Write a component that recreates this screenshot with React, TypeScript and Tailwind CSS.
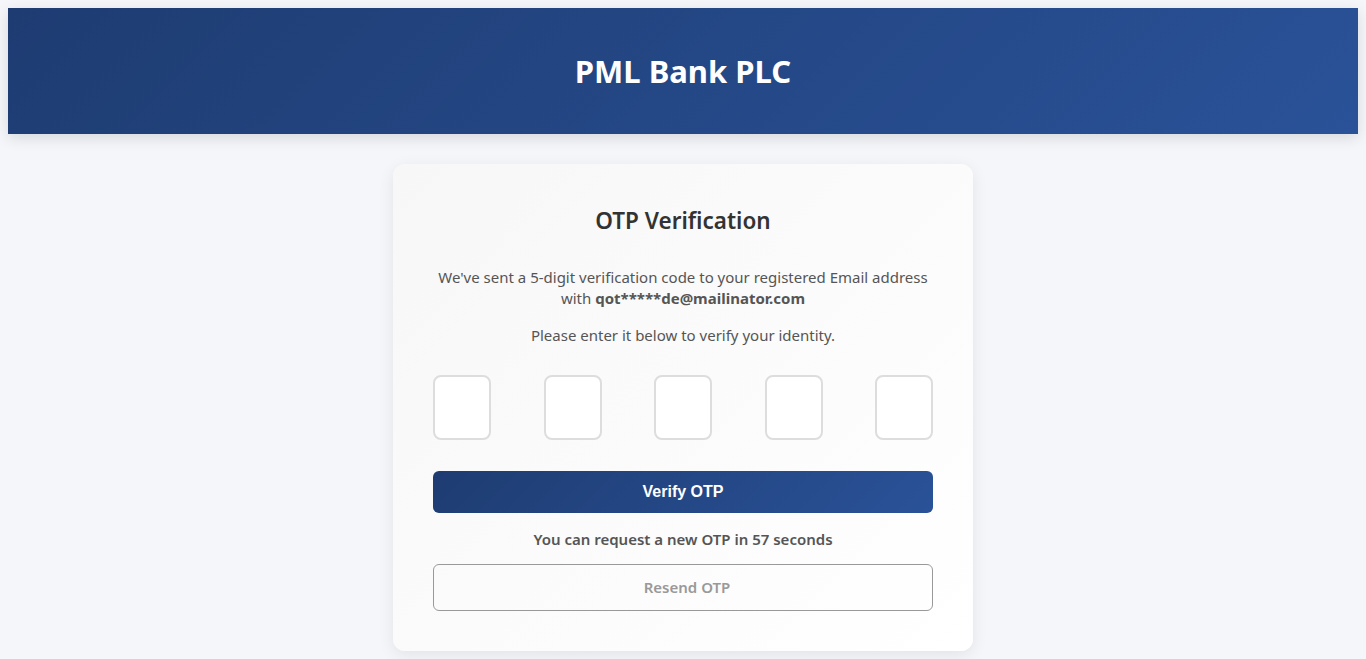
import React from 'react';

const OtpBox = () => (
  <input
    type="text"
    maxLength={1}
    className="w-[58px] h-[65px] rounded-lg border-2 border-[#dddddd] bg-white text-center text-2xl outline-none"
  />
);

export default function App() {
  return (
    <div className="min-h-screen bg-[#f5f6fa] p-2 font-['Noto_Sans','Open_Sans',sans-serif]">
      {/* Header */}
      <header className="h-[126px] flex items-center justify-center bg-[linear-gradient(135deg,#1e3c72,#2a5298)] shadow-[0_4px_14px_rgba(0,0,0,0.12)]">
        <h1 className="text-white text-[31px] font-bold leading-none">PML Bank PLC</h1>
      </header>

      {/* Card */}
      <div className="mt-[30px] mx-auto w-[580px] rounded-xl bg-[linear-gradient(135deg,#f7f7f7,#ffffff)] shadow-[0_4px_16px_rgba(0,0,0,0.08)] px-10 pt-10 pb-10 text-center">
        <h2 className="text-[22.5px] leading-[33px] font-semibold text-[#333333]">OTP Verification</h2>

        <p className="mt-[30px] text-[15px] leading-[21px] text-[#555555]">
          We've sent a 5-digit verification code to your registered Email address
          <br />
          with <strong className="font-bold">qot*****de@mailinator.com</strong>
        </p>
        <p className="mt-4 text-[15px] leading-[21px] text-[#555555]">
          Please enter it below to verify your identity.
        </p>

        <div className="mt-[29px] flex justify-between">
          <OtpBox />
          <OtpBox />
          <OtpBox />
          <OtpBox />
          <OtpBox />
        </div>

        <button className="mt-[31px] w-full h-[42px] rounded-md bg-[linear-gradient(135deg,#1e3c72,#2a5298)] text-white text-base font-bold font-['Liberation_Sans',Arial,sans-serif]">
          Verify OTP
        </button>

        <p className="mt-4 text-[15px] leading-[21px] font-semibold text-[#555555]">
          You can request a new OTP in 57 seconds
        </p>

        <button
          disabled
          className="mt-[14px] w-full h-[47px] rounded-md border border-[#999999] bg-transparent pl-2 text-[15px] font-semibold text-[#999999]"
        >
          Resend OTP
        </button>
      </div>
    </div>
  );
}
